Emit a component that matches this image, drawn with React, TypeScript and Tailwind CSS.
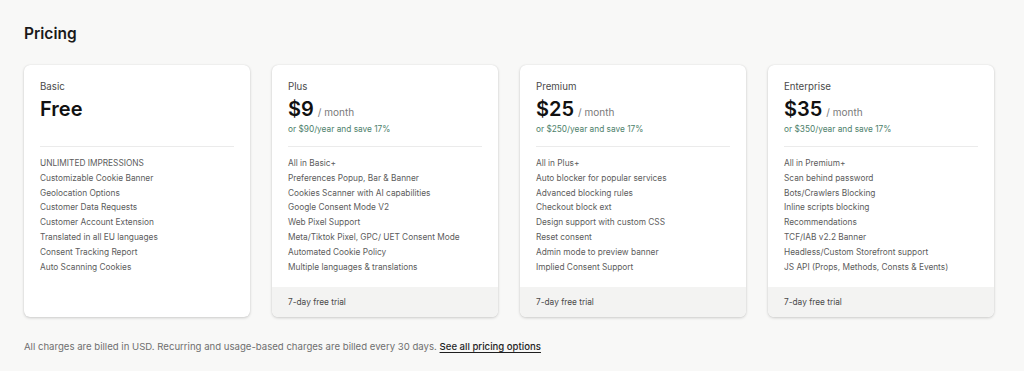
const plans = [
  {
    name: "Basic",
    price: "Free",
    features: [
      "UNLIMITED IMPRESSIONS",
      "Customizable Cookie Banner",
      "Geolocation Options",
      "Customer Data Requests",
      "Customer Account Extension",
      "Translated in all EU languages",
      "Consent Tracking Report",
      "Auto Scanning Cookies",
    ],
  },
  {
    name: "Plus",
    price: "$9",
    yearly: "or $90/year and save 17%",
    features: [
      "All in Basic+",
      "Preferences Popup, Bar & Banner",
      "Cookies Scanner with AI capabilities",
      "Google Consent Mode V2",
      "Web Pixel Support",
      "Meta/Tiktok Pixel, GPC/ UET Consent Mode",
      "Automated Cookie Policy",
      "Multiple languages & translations",
    ],
  },
  {
    name: "Premium",
    price: "$25",
    yearly: "or $250/year and save 17%",
    features: [
      "All in Plus+",
      "Auto blocker for popular services",
      "Advanced blocking rules",
      "Checkout block ext",
      "Design support with custom CSS",
      "Reset consent",
      "Admin mode to preview banner",
      "Implied Consent Support",
    ],
  },
  {
    name: "Enterprise",
    price: "$35",
    yearly: "or $350/year and save 17%",
    features: [
      "All in Premium+",
      "Scan behind password",
      "Bots/Crawlers Blocking",
      "Inline scripts blocking",
      "Recommendations",
      "TCF/IAB v2.2 Banner",
      "Headless/Custom Storefront support",
      "JS API (Props, Methods, Consts & Events)",
    ],
  },
];

const PlanCard = ({ plan }: { plan: (typeof plans)[number] }) => {
  return (
    <div className="flex h-[252px] w-[226px] flex-col overflow-hidden rounded-md bg-white shadow-[0_1px_3px_rgba(0,0,0,0.18),0_0_1px_rgba(0,0,0,0.12)]">
      <div className="flex-1 px-4 pt-[15px]">
        <div className="text-[9.7px] leading-[14px] text-[#4a4a4a]">{plan.name}</div>
        <div className="mt-[2px] flex items-baseline gap-[4px]">
          <span className="text-[20px] font-semibold leading-[26px] text-[#111]">{plan.price}</span>
          {plan.yearly && <span className="text-[10px] text-[#7a7a7a]">/ month</span>}
        </div>
        <div className="mt-0 h-[14px] text-[8.3px] leading-[14px] text-[#4e7f6b]">
          {plan.yearly}
        </div>
        <div className="mt-[10px] border-t border-[#ebebeb]" />
        <ul className="mt-[9px] flex flex-col text-[8.3px] leading-[14.8px] text-[#5c5c5c]">
          {plan.features.map((f) => (
            <li key={f}>{f}</li>
          ))}
        </ul>
      </div>
      {plan.yearly && (
        <div className="flex h-[30px] items-center bg-[#f3f3f2] px-4 text-[8.3px] text-[#4a4a4a]">
          7-day free trial
        </div>
      )}
    </div>
  );
};

const App = () => {
  return (
    <div
      className="h-[371px] w-[1024px] bg-[#f8f8f7] px-6 pt-[24px]"
      style={{ fontFamily: "Inter, 'Noto Sans', sans-serif" }}
    >
      <h1 className="text-[15.5px] font-semibold leading-[20px] text-[#1a1a1a]">Pricing</h1>
      <div className="mt-[21px] flex gap-[22px]">
        {plans.map((p) => (
          <PlanCard key={p.name} plan={p} />
        ))}
      </div>
      <p className="mt-[23px] text-[9.6px] text-[#6f6f6f]">
        All charges are billed in USD. Recurring and usage-based charges are billed every 30 days.{" "}
        <a className="font-medium text-[#1f1f1f] underline underline-offset-2">See all pricing options</a>
      </p>
    </div>
  );
};

export default App;
